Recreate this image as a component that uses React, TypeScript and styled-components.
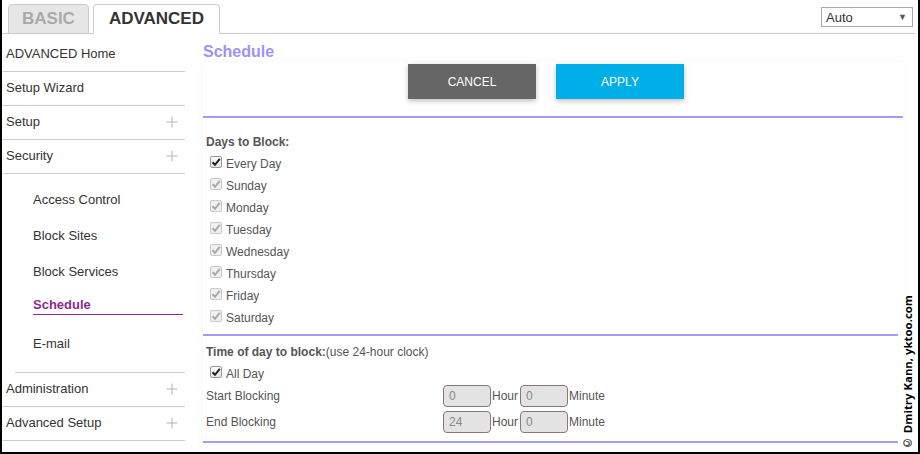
import React from "react";
import styled, { createGlobalStyle } from "styled-components";

const GlobalStyle = createGlobalStyle`
  html, body {
    margin: 0;
    padding: 0;
    background: #fff;
    overflow: hidden;
  }
  * { box-sizing: border-box; }
`;

const Frame = styled.div`
  position: relative;
  width: 920px;
  height: 454px;
  border-left: 2px solid #000;
  border-right: 2px solid #000;
  border-bottom: 2px solid #000;
  font-family: "Liberation Sans", Arial, sans-serif;
  color: #333;
  overflow: hidden;
`;

const Header = styled.div`
  display: flex;
  align-items: flex-end;
  height: 34px;
  margin-right: 3px;
  border-bottom: 1px solid #ccc;
  padding-left: 6px;
  gap: 4px;
`;

const Tab = styled.div<{ $active?: boolean }>`
  height: 30px;
  margin-bottom: -1px;
  padding: 0 ${(p) => (p.$active ? 15 : 13)}px;
  display: flex;
  align-items: center;
  justify-content: center;
  font-size: 17px;
  font-weight: bold;
  border: 1px solid #ccc;
  border-radius: 4px 4px 0 0;
  background: ${(p) => (p.$active ? "#fff" : "#e6e6e6")};
  color: ${(p) => (p.$active ? "#333" : "#aaa")};
  ${(p) => (p.$active ? "border-bottom-color: #fff;" : "")}
`;

const SelectBox = styled.div`
  margin-left: auto;
  margin-right: 2px;
  align-self: flex-start;
  margin-top: 7px;
  width: 92px;
  height: 20px;
  border: 1px solid #aaa;
  display: flex;
  align-items: center;
  justify-content: space-between;
  padding: 0 5px 0 4px;
  font-size: 13px;
  color: #333;

  span {
    font-size: 9px;
    color: #555;
  }
`;

const Body = styled.div`
  display: flex;
  gap: 18px;
  padding-left: 1px;
`;

const Sidebar = styled.nav`
  width: 182px;
  padding-top: 4px;
  flex-shrink: 0;
`;

const MenuItem = styled.div`
  height: 34px;
  display: flex;
  align-items: center;
  justify-content: space-between;
  padding: 0 7px 2px 3px;
  border-bottom: 1px solid #ccc;
  font-size: 13px;
  color: #333;
`;

const SubMenu = styled.div`
  padding: 8px 0 10px 0;
  margin-left: 12px;
  border-bottom: 1px solid #ccc;
`;

const SubItem = styled.div<{ $active?: boolean }>`
  margin-left: 18px;
  margin-right: ${(p) => (p.$active ? "2px" : "0")};
  font-size: 13px;
  line-height: 16px;
  color: ${(p) => (p.$active ? "#8e2a91" : "#333")};
  font-weight: ${(p) => (p.$active ? "bold" : "normal")};
  padding: ${(p) => (p.$active ? "7px 0 1px" : "10px 0")};
  margin-bottom: ${(p) => (p.$active ? "11px" : "0")};
  border-bottom: ${(p) => (p.$active ? "1px solid #8e2a91" : "none")};
`;

const Main = styled.main`
  width: 700px;
  display: flex;
  flex-direction: column;
`;

const Title = styled.h1`
  margin: 8px 0 0;
  font-size: 16px;
  line-height: 20px;
  font-weight: bold;
  color: #9d93f5;
`;

const Panel = styled.div`
  background: #fff;
  box-shadow: 0 0 8px rgba(0, 0, 0, 0.04);
  padding-bottom: 20px;
`;

const ButtonRow = styled.div`
  display: flex;
  gap: 20px;
  padding: 2px 0 17px 205px;
`;

const Button = styled.button<{ $primary?: boolean }>`
  width: 128px;
  height: 35px;
  border: none;
  font-family: "Liberation Sans", Arial, sans-serif;
  font-size: 12px;
  color: #fff;
  background: ${(p) => (p.$primary ? "#00aee8" : "#666")};
  box-shadow: 0 2px 5px rgba(0, 0, 0, 0.25);
`;

const Rule = styled.div`
  height: 2px;
  background: #a29bfa;
`;

const Section = styled.div<{ $top: number; $bottom: number }>`
  padding: ${(p) => p.$top}px 0 ${(p) => p.$bottom}px 3px;
  font-size: 12px;
  color: #555;
`;

const SectionTitle = styled.div`
  line-height: 14px;
  margin-bottom: 4px;
  b {
    font-weight: bold;
  }
`;

const CheckRow = styled.div`
  height: 22px;
  display: flex;
  align-items: center;
  gap: 4px;
  padding-left: 4px;
  font-size: 12px;
  color: #555;
`;

const Box = styled.span<{ $disabled?: boolean }>`
  width: 12px;
  height: 12px;
  border: 1px solid ${(p) => (p.$disabled ? "#c8c8c8" : "#999")};
  border-radius: 2px;
  background: ${(p) => (p.$disabled ? "#f0f0f0" : "linear-gradient(#fcfcfc, #e4e4e4)")};
  display: flex;
  align-items: center;
  justify-content: center;
  margin-top: -4px;
`;

const TimeRow = styled.div`
  height: 22px;
  margin-bottom: 4px;
  display: flex;
  align-items: center;
  font-size: 12px;
  color: #555;
`;

const TimeLabel = styled.div`
  width: 237px;
`;

const TimeInput = styled.div`
  width: 48px;
  height: 22px;
  border: 1px solid #8a7676;
  border-radius: 4px;
  background: #e3e3e3;
  color: #888;
  font-size: 12px;
  display: flex;
  align-items: center;
  padding-left: 5px;
`;

const Unit = styled.span`
  padding: 0 2px 0 1px;
`;

const Watermark = styled.div`
  position: absolute;
  right: 1px;
  bottom: 1px;
  padding: 0 2px;
  background: #fff;
  writing-mode: vertical-rl;
  transform: rotate(180deg);
  font-family: "Open Sans", "DejaVu Sans", sans-serif;
  font-weight: bold;
  font-size: 11.4px;
  color: #000;
`;

const Plus = () => (
  <svg width="12" height="12" viewBox="0 0 12 12">
    <path d="M6 0.5V11.5M0.5 6H11.5" stroke="#b4b4b4" strokeWidth="1" />
  </svg>
);

const Check = ({ disabled }: { disabled?: boolean }) => (
  <Box $disabled={disabled}>
    <svg width="10" height="10" viewBox="0 0 10 10">
      <path
        d="M1.5 5.2L4 7.8L8.8 1.8"
        fill="none"
        stroke={disabled ? "#a8a8a8" : "#222"}
        strokeWidth="2"
      />
    </svg>
  </Box>
);

const days = ["Sunday", "Monday", "Tuesday", "Wednesday", "Thursday", "Friday", "Saturday"];

export default function App() {
  return (
    <>
      <GlobalStyle />
      <Frame>
        <Header>
          <Tab>BASIC</Tab>
          <Tab $active>ADVANCED</Tab>
          <SelectBox>
            Auto <span>▼</span>
          </SelectBox>
        </Header>
        <Body>
          <Sidebar>
            <MenuItem>ADVANCED Home</MenuItem>
            <MenuItem>Setup Wizard</MenuItem>
            <MenuItem>
              Setup <Plus />
            </MenuItem>
            <MenuItem>
              Security <Plus />
            </MenuItem>
            <SubMenu>
              <SubItem>Access Control</SubItem>
              <SubItem>Block Sites</SubItem>
              <SubItem>Block Services</SubItem>
              <SubItem $active>Schedule</SubItem>
              <SubItem>E-mail</SubItem>
            </SubMenu>
            <MenuItem>
              Administration <Plus />
            </MenuItem>
            <MenuItem>
              Advanced Setup <Plus />
            </MenuItem>
          </Sidebar>
          <Main>
            <Title>Schedule</Title>
            <Panel>
              <ButtonRow>
                <Button>CANCEL</Button>
                <Button $primary>APPLY</Button>
              </ButtonRow>
              <Rule />
              <Section $top={17} $bottom={5}>
                <SectionTitle>
                  <b>Days to Block:</b>
                </SectionTitle>
                <CheckRow>
                  <Check />
                  Every Day
                </CheckRow>
                {days.map((d) => (
                  <CheckRow key={d}>
                    <Check disabled />
                    {d}
                  </CheckRow>
                ))}
              </Section>
              <Rule />
              <Section $top={9} $bottom={4}>
                <SectionTitle>
                  <b>Time of day to block:</b>(use 24-hour clock)
                </SectionTitle>
                <CheckRow>
                  <Check />
                  All Day
                </CheckRow>
                <TimeRow>
                  <TimeLabel>Start Blocking</TimeLabel>
                  <TimeInput>0</TimeInput>
                  <Unit>Hour</Unit>
                  <TimeInput>0</TimeInput>
                  <Unit>Minute</Unit>
                </TimeRow>
                <TimeRow>
                  <TimeLabel>End Blocking</TimeLabel>
                  <TimeInput>24</TimeInput>
                  <Unit>Hour</Unit>
                  <TimeInput>0</TimeInput>
                  <Unit>Minute</Unit>
                </TimeRow>
              </Section>
              <Rule />
            </Panel>
          </Main>
        </Body>
        <Watermark>© Dmitry Kann, yktoo.com</Watermark>
      </Frame>
    </>
  );
}
